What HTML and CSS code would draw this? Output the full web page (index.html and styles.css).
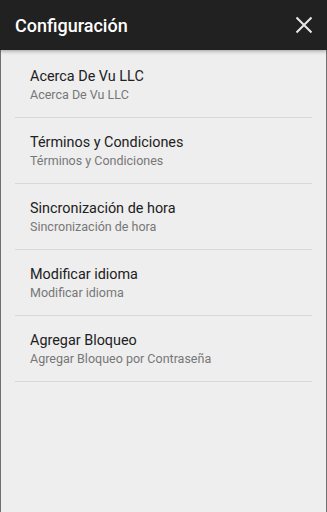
FILE: index.html
```html
<!DOCTYPE html>
<html lang="es">
<head>
<meta charset="utf-8">
<title>Configuración</title>
<link rel="stylesheet" href="styles.css">
</head>
<body>
<div class="screen">
  <header class="topbar">
    <h1 class="topbar-title">Configuración</h1>
    <button class="close-btn" aria-label="Cerrar">
      <svg width="18" height="18" viewBox="0 0 18 18"><path d="M1.5 1.5L16.5 16.5M16.5 1.5L1.5 16.5" stroke="#e6e6e6" stroke-width="2.1" fill="none"/></svg>
    </button>
  </header>
  <main class="panel">
    <ul class="settings">
      <li class="item"><div class="item-title">Acerca De Vu LLC</div><div class="item-sub">Acerca De Vu LLC</div></li>
      <li class="item"><div class="item-title">Términos y Condiciones</div><div class="item-sub">Términos y Condiciones</div></li>
      <li class="item"><div class="item-title">Sincronización de hora</div><div class="item-sub">Sincronización de hora</div></li>
      <li class="item"><div class="item-title">Modificar idioma</div><div class="item-sub">Modificar idioma</div></li>
      <li class="item"><div class="item-title">Agregar Bloqueo</div><div class="item-sub">Agregar Bloqueo por Contraseña</div></li>
    </ul>
  </main>
</div>
</body>
</html>
```
FILE: styles.css
```css
html, body {
  margin: 0;
  padding: 0;
  height: 100%;
}
body {
  font-family: Roboto, "Noto Sans", "Liberation Sans", sans-serif;
  background: #eeeeee;
}
.screen {
  display: flex;
  flex-direction: column;
  height: 512px;
}
.topbar {
  height: 50px;
  flex: 0 0 50px;
  background: #212121;
  display: flex;
  align-items: center;
  justify-content: space-between;
  padding: 0 14px 0 15px;
  box-sizing: border-box;
  position: relative;
  z-index: 1;
  box-shadow: 0 1px 4px rgba(0,0,0,0.35);
}
.topbar-title {
  margin: 0;
  color: #ffffff;
  font-size: 18px;
  font-weight: 500;
}
.close-btn {
  background: none;
  border: 0;
  padding: 0;
  width: 18px;
  height: 18px;
  display: flex;
}
.panel {
  flex: 1;
  background: #eeeeee;
  border-left: 1px solid #707070;
  border-right: 1px solid #707070;
}
.settings {
  list-style: none;
  margin: 0;
  padding: 2px 14px 0 14px;
}
.item {
  padding: 16px 0 14px 15px;
  border-bottom: 1px solid #d8d8d8;
}
.item-title {
  font-size: 14.4px;
  line-height: 18px;
  color: #212121;
}
.item-sub {
  margin-top: 1px;
  font-size: 12.5px;
  line-height: 16px;
  color: #777777;
}
```
